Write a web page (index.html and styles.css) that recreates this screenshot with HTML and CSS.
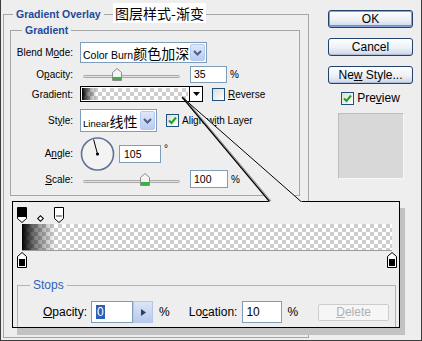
FILE: index.html
```html
<!DOCTYPE html>
<html lang="en">
<head>
    <meta charset="UTF-8">
    <meta name="viewport" content="width=device-width, initial-scale=1.0">
    <title>Gradient Overlay</title>
    <link rel="stylesheet" href="styles.css">
</head>
<body>
<div class="dialog">
    <fieldset class="group outer">
        <legend>Gradient Overlay</legend>
        <fieldset class="group inner">
            <legend>Gradient</legend>

            <div class="row r1">
                <span class="lbl">Blend M<u>o</u>de:</span>
                <div class="combo blend">
                    <span class="val">Color Burn<span class="cn">颜色加深</span></span>
                    <span class="drop"><svg width="13" height="13" viewBox="0 0 13 13"><path d="M3 5 L6.5 8.5 L10 5" fill="none" stroke="#4d6185" stroke-width="2"/></svg></span>
                </div>
            </div>

            <div class="row r2">
                <span class="lbl">O<u>p</u>acity:</span>
                <div class="slider">
                    <div class="track"></div>
                    <svg class="thumb" style="left: 35%" width="10" height="13" viewBox="0 0 10 13"><path d="M0.5 4.5 L5 0.5 L9.5 4.5 V12.5 H0.5 Z" fill="#f4f4f4" stroke="#8c8c8c"/><rect x="1" y="9" width="8" height="3" fill="#3cae48"/></svg>
                </div>
                <span class="field f-op">35</span>
                <span class="unit">%</span>
            </div>

            <div class="row r3">
                <span class="lbl">Gradient:</span>
                <div class="grad-pick">
                    <span class="swatch"></span>
                    <span class="arrow"><svg width="7" height="4" viewBox="0 0 7 4"><path d="M0 0 H7 L3.5 4 Z" fill="#000"/></svg></span>
                </div>
                <span class="check"></span>
                <span class="check-text"><u>R</u>everse</span>
            </div>

            <div class="row r4">
                <span class="lbl">St<u>y</u>le:</span>
                <div class="combo style">
                    <span class="val"><span class="small">Linear</span><span class="cn">线性</span></span>
                    <span class="drop"><svg width="13" height="13" viewBox="0 0 13 13"><path d="M3 5 L6.5 8.5 L10 5" fill="none" stroke="#4d6185" stroke-width="2"/></svg></span>
                </div>
                <span class="check on"><svg width="11" height="11" viewBox="0 0 11 11"><path d="M2 5.5 L4.5 8 L9 2.5" fill="none" stroke="#21a121" stroke-width="2"/></svg></span>
                <span class="check-text">Align w<u>i</u>th Layer</span>
            </div>

            <div class="row r5">
                <span class="lbl">A<u>n</u>gle:</span>
                <svg class="dial" width="37" height="34" viewBox="0 0 37 34">
                    <circle cx="18.5" cy="17" r="16" fill="#f3f3f1" stroke="#5f729a" stroke-width="1.6"/>
                    <line x1="18.5" y1="17" x2="14.6" y2="2.5" stroke="#000" stroke-width="1"/>
                    <circle cx="18.5" cy="17" r="1.6" fill="#000"/>
                </svg>
                <span class="field f-angle">105</span>
                <span class="deg">°</span>
            </div>

            <div class="row r6">
                <span class="lbl"><u>S</u>cale:</span>
                <div class="slider">
                    <div class="track"></div>
                    <svg class="thumb" style="left: 64%" width="10" height="13" viewBox="0 0 10 13"><path d="M0.5 4.5 L5 0.5 L9.5 4.5 V12.5 H0.5 Z" fill="#f4f4f4" stroke="#8c8c8c"/><rect x="1" y="9" width="8" height="3" fill="#3cae48"/></svg>
                </div>
                <span class="field f-scale">100</span>
                <span class="unit">%</span>
            </div>
        </fieldset>
    </fieldset>

    <div class="side">
        <button class="btn default">OK</button>
        <button class="btn">Cancel</button>
        <button class="btn">Ne<u>w</u> Style...</button>
        <div class="preview-row">
            <span class="check on"><svg width="11" height="11" viewBox="0 0 11 11"><path d="M2 5.5 L4.5 8 L9 2.5" fill="none" stroke="#21a121" stroke-width="2"/></svg></span>
            <span class="preview-text">Pre<u>v</u>iew</span>
        </div>
        <div class="preview"></div>
    </div>

    <div class="stamp">图层样式-渐变</div>

    <div class="editor">
        <div class="marks top">
            <svg class="mark" style="left: 0%" width="10" height="16" viewBox="0 0 10 16"><path d="M0.5 0.5 H9.5 V11.5 L5 15.5 L0.5 11.5 Z" fill="#fff" stroke="#000"/><rect x="1" y="1" width="8" height="9" fill="#000"/></svg>
            <span class="mid" style="left: 5%"></span>
            <svg class="mark" style="left: 10%" width="10" height="16" viewBox="0 0 10 16"><path d="M0.5 0.5 H9.5 V11.5 L5 15.5 L0.5 11.5 Z" fill="#fff" stroke="#000"/><rect x="2" y="8" width="6" height="2" fill="#9a9a9a"/></svg>
        </div>
        <div class="bar"></div>
        <div class="marks bottom">
            <svg class="mark" style="left: 0%" width="10" height="16" viewBox="0 0 10 16"><path d="M5 0.5 L9.5 4.5 V15.5 H0.5 V4.5 Z" fill="#fff" stroke="#000"/><rect x="2" y="7" width="6" height="7" fill="#000"/></svg>
            <svg class="mark" style="left: 100%" width="10" height="16" viewBox="0 0 10 16"><path d="M5 0.5 L9.5 4.5 V15.5 H0.5 V4.5 Z" fill="#fff" stroke="#000"/><rect x="2" y="7" width="6" height="7" fill="#000"/></svg>
        </div>

        <fieldset class="group stops">
            <legend>Stops</legend>
            <div class="stop-row">
                <span class="big-lbl"><u>O</u>pacity:</span>
                <span class="box op-box"><span class="sel">0</span></span>
                <span class="spin"><svg width="5" height="7" viewBox="0 0 5 7"><path d="M0 0 L5 3.5 L0 7 Z" fill="#2b3f66"/></svg></span>
                <span class="big-unit">%</span>
                <span class="big-lbl loc">Lo<u>c</u>ation:</span>
                <span class="box loc-box">10</span>
                <span class="big-unit">%</span>
                <button class="del" disabled><u>D</u>elete</button>
            </div>
        </fieldset>
    </div>

    <svg class="callout" width="420" height="340" viewBox="1 0 420 340">
        <polygon points="182,97 269,202 302,202" fill="#eeeeee"/>
        <line x1="183.5" y1="97" x2="271" y2="201" stroke="#8a8a8a" stroke-width="1"/>
        <line x1="182" y1="97" x2="269.5" y2="201.5" stroke="#000" stroke-width="1.2"/>
        <line x1="182" y1="97" x2="301" y2="201.5" stroke="#000" stroke-width="1"/>
    </svg>
</div>
</body>
</html>
```

FILE: styles.css
```css
* {
    box-sizing: border-box;
}
body {
    margin: 0;
    width: 422px;
    height: 341px;
    background-color: #eeeeee;
    border: 1px solid #3c3c3c;
    border-top: none;
    font-family: "Liberation Sans", Arial, "Noto Sans CJK SC", sans-serif;
    font-size: 10px;
    color: #000;
    overflow: hidden;
}
.dialog {
    position: relative;
    display: flex;
    align-items: flex-start;
    height: 340px;
    padding-left: 2px;
}
.cn {
    font-family: "Noto Sans CJK SC", sans-serif;
    font-size: 14px;
}

/* group boxes */
.group {
    margin: 0;
    padding: 0;
    min-width: 0;
    border: 1px solid #a6a6a6;
}
.group > legend {
    padding: 0 3px;
    font-weight: bold;
    font-size: 10.5px;
    line-height: 14px;
    color: #21499a;
}
.outer {
    width: 306px;
    height: 331px;
    margin-top: 7px;
    padding: 0 8px 0 6px;
}
.outer > legend {
    margin-left: 3px;
}
.inner {
    height: 173px;
    margin-top: 2px;
    padding-top: 4px;
}
.inner > legend {
    margin-left: 11px;
}

/* rows */
.row {
    display: flex;
    align-items: center;
}
.r1 { height: 23px; }
.r2 { height: 20px; }
.r3 { height: 20px; }
.r4 { height: 33px; }
.r5 { height: 33px; }
.r6 { height: 18px; }
.lbl {
    flex: none;
    width: 62px;
    margin-right: 7px;
    text-align: right;
    white-space: nowrap;
}

.combo {
    display: flex;
    align-items: center;
    background: #fff;
    border: 1px solid #7f9db9;
    padding-left: 2px;
}
.combo .val {
    flex: 1;
    white-space: nowrap;
    overflow: hidden;
    font-size: 10.5px;
}
.combo .small {
    font-size: 9.5px;
}
.combo .drop {
    display: flex;
    align-items: center;
    justify-content: center;
    align-self: stretch;
    width: 15px;
    margin: 1px;
    border: 1px solid #b4c8f0;
    border-radius: 2px;
    background: linear-gradient(#dfe8f9, #b9cbf0);
}
.blend {
    width: 127px;
    height: 21px;
}
.style {
    width: 77px;
    height: 23px;
}

.slider {
    position: relative;
    width: 97px;
    height: 13px;
    margin-left: 3px;
}
.track {
    margin-top: 7px;
    height: 3px;
    background: #e2e2e2;
    border: 1px solid #a9a9a9;
    border-radius: 2px;
}
.thumb {
    position: absolute;
    top: 0;
    margin-left: -5px;
}

.field {
    display: flex;
    align-items: center;
    background: #fff;
    border: 1px solid #7f9db9;
    padding-left: 3px;
    font-size: 10.5px;
}
.f-op {
    width: 37px;
    height: 17px;
    margin-left: 10px;
}
.f-scale {
    width: 38px;
    height: 18px;
    margin-left: 10px;
}
.f-angle {
    width: 42px;
    height: 18px;
    margin-left: 3px;
    padding-left: 4px;
}
.unit {
    margin-left: 3px;
}
.deg {
    align-self: flex-start;
    margin: 6px 0 0 3px;
}
.dial {
    margin-left: -1px;
}

.grad-pick {
    display: flex;
    width: 123px;
    height: 16px;
    border: 1px solid #000;
}
.swatch {
    flex: 1;
    border: 1px solid #fff;
    background: linear-gradient(to right, #000, rgba(0, 0, 0, 0.45) 6%, rgba(0, 0, 0, 0) 14%),
        repeating-conic-gradient(#cdcdcd 0 25%, #fff 0 50%) 0 0 / 8px 8px;
}
.arrow {
    display: flex;
    align-items: center;
    justify-content: center;
    width: 13px;
    border-left: 1px solid #000;
    background: #fff;
}

.check {
    flex: none;
    display: flex;
    align-items: center;
    justify-content: center;
    width: 13px;
    height: 13px;
    margin-left: 9px;
    border: 1px solid #1c5180;
    background: linear-gradient(135deg, #dcdcd7, #ffffff);
}
.check-text {
    margin-left: 3px;
    white-space: nowrap;
}

/* right column */
.side {
    display: flex;
    flex-direction: column;
    align-items: center;
    width: 85px;
    margin-left: 19px;
    padding-top: 10px;
}
.btn {
    width: 85px;
    height: 18px;
    margin: 0 0 10px;
    padding: 0;
    border: 1px solid #23416d;
    border-radius: 3px;
    background: linear-gradient(#ffffff, #edf0f6 55%, #cdd6e9);
    box-shadow: inset 0 -1px 0 #b2bfd9;
    font-family: inherit;
    font-size: 12px;
    line-height: 15px;
    color: #000;
}
.btn.default {
    box-shadow: inset 0 0 0 1px #85a3db, inset 0 -2px 0 #6f8fd0;
}
.preview-row {
    display: flex;
    align-items: center;
    height: 14px;
    margin-top: -3px;
}
.preview-row .check {
    margin-left: 0;
}
.preview-text {
    margin-left: 3px;
    font-size: 12px;
}
.preview {
    width: 66px;
    height: 66px;
    margin-top: 8px;
    background: #d8d8d8;
    border: 1px solid #bdbdbd;
    border-right-color: #f6f6f6;
    border-bottom-color: #f6f6f6;
}

.stamp {
    position: absolute;
    left: 112px;
    top: 3px;
    width: 93px;
    height: 20px;
    background: #fff;
    font-family: "Noto Sans CJK SC", sans-serif;
    font-size: 14px;
    line-height: 20px;
    text-align: center;
}

/* gradient editor callout */
.editor {
    position: absolute;
    left: 11px;
    top: 201px;
    width: 388px;
    height: 127px;
    background: #eeeeee;
    border: 1px solid #000;
    box-shadow: 5px 7px 0 #c2c2c2;
    overflow: hidden;
    font-size: 12px;
}
.marks {
    position: relative;
    height: 16px;
    margin: 0 7px 0 9px;
}
.marks.top {
    margin-top: 5px;
}
.marks.bottom {
    margin-top: 1px;
}
.mark {
    position: absolute;
    top: 0;
    margin-left: -5px;
}
.mid {
    position: absolute;
    bottom: 2px;
    width: 5px;
    height: 5px;
    margin-left: -3px;
    border: 1px solid #000;
    background: #fff;
    transform: rotate(45deg);
}
.bar {
    height: 27px;
    margin: 1px 7px 0 9px;
    border-bottom: 1px solid #9a9a9a;
    background: linear-gradient(to right, #000, rgba(0, 0, 0, 0.5) 3.5%, rgba(0, 0, 0, 0) 9%),
        repeating-conic-gradient(#cdcdcd 0 25%, #fff 0 50%) 0 0 / 8px 8px;
}

.stops {
    height: 80px;
    margin: 10px 3px 0 4px;
    border-color: #b3b3b3;
    border-bottom: none;
    padding-top: 8px;
}
.stops > legend {
    margin-left: 12px;
    font-weight: normal;
    font-size: 12px;
    line-height: 15px;
    color: #2f5fb8;
}
.stop-row {
    display: flex;
    align-items: center;
    height: 22px;
    padding-left: 25px;
    white-space: nowrap;
}
.box {
    display: flex;
    align-items: center;
    height: 22px;
    background: #fff;
    border: 1px solid #7f9db9;
    padding-left: 4px;
}
.op-box {
    width: 42px;
    margin-left: 4px;
}
.sel {
    background: #2d5fb7;
    color: #fff;
    padding: 0 1px;
    line-height: 14px;
}
.spin {
    display: flex;
    align-items: center;
    justify-content: center;
    width: 20px;
    height: 22px;
    border: 1px solid #b4c6ea;
    background: linear-gradient(#dbe5f8, #b8c9ec);
}
.big-unit {
    margin-left: 6px;
}
.loc {
    margin-left: 19px;
}
.loc-box {
    width: 40px;
    margin-left: 5px;
    padding-left: 3px;
}
.stop-row .loc-box + .big-unit {
    margin-left: 5px;
}
.del {
    width: 71px;
    height: 17px;
    margin-left: 20px;
    padding: 0;
    border: 1px solid #cdcdcd;
    border-radius: 2px;
    background: #f6f6f6;
    font-family: inherit;
    font-size: 12px;
    color: #b0b0b0;
}

.callout {
    position: absolute;
    left: 0;
    top: 0;
    pointer-events: none;
}
```
